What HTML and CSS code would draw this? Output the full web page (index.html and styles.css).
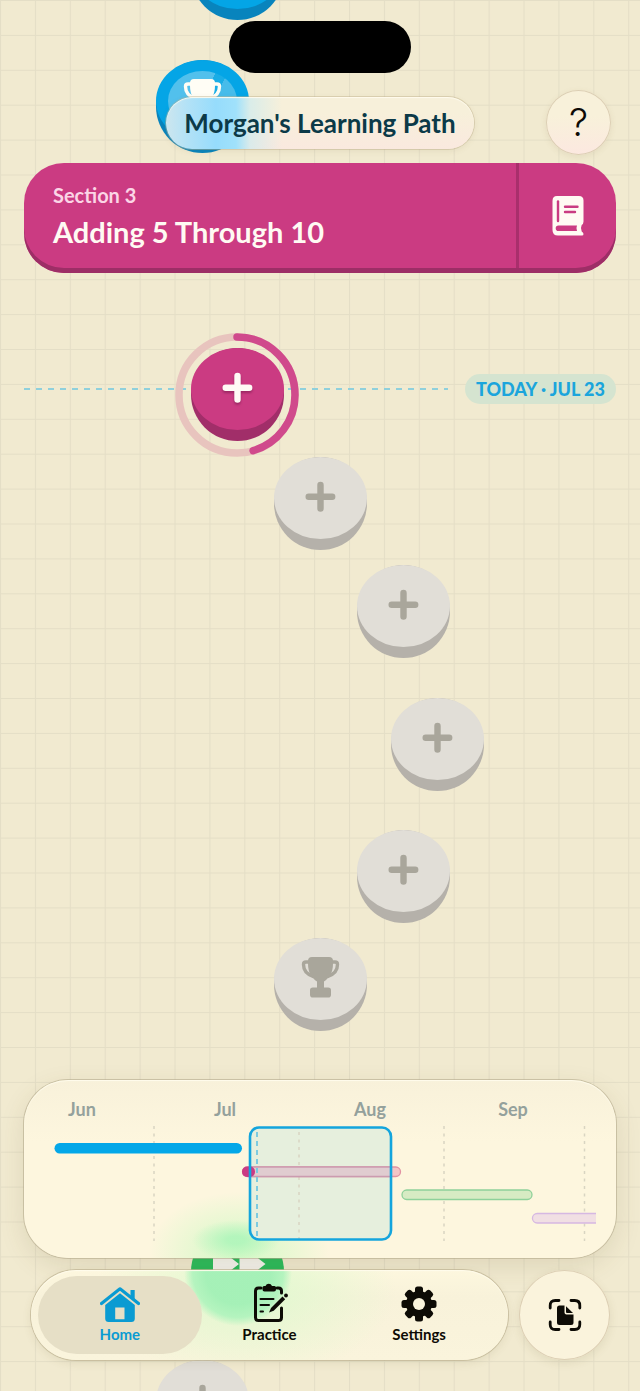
FILE: index.html
```html
<!DOCTYPE html>
<html lang="en">
<head>
<meta charset="utf-8">
<meta name="viewport" content="width=device-width, initial-scale=1">
<title>Learning Path</title>
<link rel="stylesheet" href="styles.css">
</head>
<body>
<svg class="defs" aria-hidden="true">
  <symbol id="plus" viewBox="0 0 93 93">
    <path d="M46.500 28v23.500M34.700 39.700h23.500" fill="none" stroke="currentColor" stroke-width="6.400" stroke-linecap="round"/>
  </symbol>
  <symbol id="trophy" viewBox="0 0 93 93">
    <path d="M37 24h-5q-2.500 0-2.500 2.500c0 7 5 10.500 10 12M56 24h5q2.500 0 2.500 2.500c0 7-5 10.500-10 12" fill="none" stroke="currentColor" stroke-width="3.400"/>
    <path d="M38 19h17q4 0 4 4v2.500c0 10-4 14.500-9 18v7h-7v-7c-5-3.500-9-8-9-18V23q0-4 4-4z" fill="currentColor"/>
    <rect x="36" y="49.500" width="21" height="10" rx="2.800" fill="currentColor"/>
  </symbol>
</svg>
<div class="screen">
  <svg class="grid-paper" aria-hidden="true">
    <defs>
      <pattern id="squares" width="34.900" height="34.900" patternUnits="userSpaceOnUse">
        <path d="M.500 0v34.900M0 .500h34.900" stroke="#e4dec6" stroke-width="1.200"/>
      </pattern>
    </defs>
    <rect width="100%" height="100%" fill="url(#squares)"/>
  </svg>

  <div class="island"></div>

  <header class="header">
    <h1 class="title">Morgan's Learning Path</h1>
    <button class="help" type="button" aria-label="Help">?</button>
  </header>

  <section class="section-card">
    <div class="section-text">
      <p class="section-label">Section 3</p>
      <h2 class="section-name">Adding 5 Through 10</h2>
    </div>
    <button class="section-book" type="button" aria-label="Open guide">
      <svg width="32" height="40" viewBox="0 0 32 40" aria-hidden="true">
        <path fill="#fffaf3" fill-rule="evenodd" d="M5 0h22q4.500 0 4.500 4.500v21q0 2.500-1.800 3.500-1.500 3 0 6.500 1.800 1 1.800 2.500 0 1.500-1.500 1.500H6q-5.500 0-5.500-5.500V5Q.500 0 5 0zM6.500 29.500a2.800 2.800 0 0 0 0 5.600h18.500q-1.200-2.800 0-5.600z"/>
        <path d="M6 5.500v19.500" stroke="#c93b82" stroke-width="2.400" stroke-linecap="round"/>
        <path d="M13 10.700h12.500M13 16h10" stroke="#c93b82" stroke-width="2.400" stroke-linecap="round"/>
      </svg>
    </button>
  </section>

  <main class="path">
    <div class="today">
      <span class="today-line"></span>
      <span class="today-pill">TODAY · JUL 23</span>
    </div>

    <button class="node done n-first" type="button" aria-label="Completed lesson"><span class="sheen"></span></button>
    <button class="node done n-cup" type="button" aria-label="Completed section trophy">
      <span class="sheen"></span><svg class="glyph"><use href="#trophy"/></svg>
    </button>

    <svg class="ring" viewBox="0 0 124 124" aria-hidden="true">
      <circle cx="62" cy="62" r="58" fill="none" stroke="#e8c4be" stroke-width="7.500"/>
      <circle cx="62" cy="62" r="58" fill="none" stroke="#d04a8c" stroke-width="7.500" stroke-linecap="round" pathLength="100" stroke-dasharray="45.500 100" transform="rotate(-90 62 62)"/>
    </svg>
    <button class="node current n-1" type="button" aria-label="Current lesson"><svg class="glyph"><use href="#plus"/></svg></button>
    <button class="node n-2" type="button" aria-label="Lesson 2"><svg class="glyph"><use href="#plus"/></svg></button>
    <button class="node n-3" type="button" aria-label="Lesson 3"><svg class="glyph"><use href="#plus"/></svg></button>
    <button class="node n-4" type="button" aria-label="Lesson 4"><svg class="glyph"><use href="#plus"/></svg></button>
    <button class="node n-5" type="button" aria-label="Lesson 5"><svg class="glyph"><use href="#plus"/></svg></button>
    <button class="node n-6" type="button" aria-label="Section trophy"><svg class="glyph"><use href="#trophy"/></svg></button>
    <button class="skip n-skip" type="button" aria-label="Skip ahead">
      <svg viewBox="0 0 93 93" aria-hidden="true"><path d="M22 24q0-5 4-2l22 17-22 17q-4 3-4-2zM48.500 24q0-5 4-2l22 17-22 17q-4 3-4-2z" fill="#f5f3ed"/></svg>
    </button>
    <button class="node n-7" type="button" aria-label="Next section lesson"><svg class="glyph"><use href="#plus"/></svg></button>
  </main>

  <section class="timeline" aria-label="Timeline">
    <svg class="chart" viewBox="0 0 552 158" role="img" aria-label="Sections from June to September">
      <g class="months">
        <text x="38" y="36">Jun</text>
        <text x="181" y="36">Jul</text>
        <text x="326" y="36">Aug</text>
        <text x="469" y="36">Sep</text>
      </g>
      <rect x="205" y="47" width="142" height="113" rx="9" fill="#e6efdd"/>
      <g stroke="#d9d5c2" stroke-width="1.500" stroke-dasharray="3 4.500">
        <path d="M110 46v115M255 52v108M400 46v115M540.500 46v115"/>
      </g>
      <rect x="10.500" y="63" width="187.500" height="10.500" rx="5.200" fill="#04a7e8"/>
      <rect x="198.500" y="87" width="158" height="9.500" rx="4.700" fill="#f3c5c5" stroke="#e192a3" stroke-width="1.300"/>
      <path d="M205 87h142v9.500H205z" fill="#e0ccd0" stroke="#cb9bb0" stroke-width="1.300"/>
      <rect x="198" y="86.500" width="13" height="10.500" rx="5" fill="#cb3b84"/>
      <path d="M213 52v108" stroke="#7ccbe0" stroke-width="2" stroke-dasharray="5 4"/>
      <rect x="358" y="110" width="130" height="9.500" rx="4.700" fill="#d7ebc3" stroke="#8fd19a" stroke-width="1.300"/>
      <path d="M552 133.500h-58.800a4.700 4.700 0 0 0 0 9.500H552z" fill="#f1dfe3"/>
      <path d="M552 133.500h-58.800a4.700 4.700 0 0 0 0 9.500H552" fill="none" stroke="#d6b8e2" stroke-width="1.300"/>
      <rect x="206" y="47.500" width="141" height="112" rx="9" fill="none" stroke="#14a5dd" stroke-width="2.600"/>
    </svg>
  </section>

  <footer class="dock">
    <nav class="tabs" aria-label="Main">
      <button class="tab active" type="button" aria-current="page">
        <svg width="40" height="38" viewBox="0 0 40 38" aria-hidden="true">
          <path d="M30.500 4h4.200v10l-4.200-3.500z" fill="currentColor"/>
          <path d="M1.500 17.500 20 2.800l18.500 14.700" fill="none" stroke="currentColor" stroke-width="3.200" stroke-linecap="round" stroke-linejoin="round"/>
          <path fill="currentColor" fill-rule="evenodd" d="M20 7.300 34.800 19v13.500q0 3.500-3.500 3.500H8.700q-3.500 0-3.500-3.500V19zM15.200 21.500v11.700h9.300V21.500z"/>
        </svg>
        <span>Home</span>
      </button>
      <button class="tab" type="button">
        <svg width="40" height="42" viewBox="0 0 40 42" aria-hidden="true">
          <path d="M12 6H9.500Q6.500 6 6.500 9v26.500q0 3 3 3h20q3 0 3-3V26M28 6h1.500q3 0 3 3v2" fill="none" stroke="currentColor" stroke-width="3" stroke-linecap="round"/>
          <path d="M15 4h1.500a3.500 3.500 0 0 1 6.500 0h2.500Q27 4 27 5.500v2q0 2-2 2h-9.500q-2 0-2-2v-2Q13.500 4 15 4z" fill="currentColor"/>
          <path d="M11.500 17h13M11.500 23h8.500M11.500 29.500h2.500" stroke="currentColor" stroke-width="2" stroke-linecap="round"/>
          <path d="m20 30.500 2-4.500 11.500-11.500 2.700 2.700L24.700 28.700z" fill="currentColor"/>
          <circle cx="37" cy="13.500" r="1.900" fill="currentColor"/>
        </svg>
        <span>Practice</span>
      </button>
      <button class="tab" type="button">
        <svg width="36" height="36" viewBox="-18 -18 36 36" aria-hidden="true">
          <g fill="currentColor">
            <rect x="-4" y="-17.500" width="8" height="35" rx="2.500"/>
            <rect x="-4" y="-17.500" width="8" height="35" rx="2.500" transform="rotate(45)"/>
            <rect x="-4" y="-17.500" width="8" height="35" rx="2.500" transform="rotate(90)"/>
            <rect x="-4" y="-17.500" width="8" height="35" rx="2.500" transform="rotate(135)"/>
            <circle r="13"/>
          </g>
          <circle r="6" fill="#faf4dc"/>
        </svg>
        <span>Settings</span>
      </button>
    </nav>
    <button class="scan" type="button" aria-label="Scan page">
      <svg width="34" height="34" viewBox="0 0 34 34" aria-hidden="true">
        <path d="M2.200 10V7.500q0-5 5-5H11M23 2.500h3.800q5 0 5 5V10M31.800 24v2.500q0 5-5 5H23M11 31.500H7.200q-5 0-5-5V24" fill="none" stroke="#0d0b05" stroke-width="2.800" stroke-linecap="round"/>
        <path d="M11.500 7.500h5v7q0 2 2 2h7v8q0 2.500-2.500 2.500H11.500Q9 27 9 24.500V10q0-2.500 2.500-2.500z" fill="#0d0b05"/>
        <path d="M18 8.200v5.800q0 1 1 1h6z" fill="#0d0b05"/>
      </svg>
    </button>
  </footer>
</div>
</body>
</html>
```
FILE: styles.css
```css
* { box-sizing: border-box; }

body {
  margin: 0;
  background: #f1ead0;
  font-family: Lato, "Noto Sans", sans-serif;
}

button {
  border: 0;
  padding: 0;
  margin: 0;
  background: none;
  font: inherit;
  color: inherit;
}

h1, h2, p { margin: 0; }

.defs {
  position: absolute;
  width: 0;
  height: 0;
}

.screen {
  position: relative;
  min-height: 100vh;
  overflow: hidden;
  padding: 21px 24px 31px;
  display: flex;
  flex-direction: column;
}

.grid-paper {
  position: absolute;
  inset: 0;
  width: 100%;
  height: 100%;
}

.island {
  position: relative;
  z-index: 3;
  align-self: center;
  width: 182px;
  height: 52px;
  border-radius: 26px;
  background: #000;
}

/* Header */
.header {
  position: relative;
  z-index: 2;
  display: grid;
  grid-template-columns: 1fr auto 1fr;
  align-items: center;
  margin-top: 17px;
  padding: 0 5px;
}

.title {
  grid-column: 2;
  padding: 0 18px;
  border-radius: 26px;
  font-size: 26px;
  line-height: 52px;
  font-weight: 700;
  white-space: nowrap;
  color: #0c3a48;
  background:
    linear-gradient(90deg, #cde6ee 0, #b4e2f6 20px, #96dcfc 50px, #a0e1fb 70px, rgba(205, 235, 240, 0.7) 84px, rgba(240, 240, 225, 0) 116px),
    linear-gradient(#f7f0da 30%, #fae9df);
  box-shadow: 0 0 0 1px rgba(190, 175, 140, 0.45), inset 0 1px 1px #fffbee, 0 2px 6px rgba(120, 100, 50, 0.1);
}

.help {
  justify-self: end;
  width: 65px;
  height: 65px;
  border-radius: 50%;
  font-family: Inter, sans-serif;
  font-size: 38px;
  line-height: 65px;
  font-weight: 300;
  color: #0d0b05;
  background: linear-gradient(#f8f1da 40%, #fce8e0);
  box-shadow: inset 0 0 0 1px #dccfb4, 0 2px 6px rgba(120, 100, 50, 0.1);
}

/* Section banner */
.section-card {
  position: relative;
  z-index: 2;
  display: flex;
  margin-top: 8px;
  padding-bottom: 5px;
  border-radius: 40px;
  color: #fffaf3;
  background: #cb3b82;
  box-shadow: inset 0 -5px 0 #9d2e66;
}

.section-text {
  flex: 1;
  padding: 19px 29px 18px;
}

.section-label {
  font-size: 20px;
  line-height: 27px;
  font-weight: 700;
  color: #fbd5e6;
}

.section-name {
  margin-top: 5px;
  font-size: 29px;
  line-height: 36px;
  font-weight: 700;
}

.section-book {
  display: grid;
  place-items: center;
  width: 100px;
  border-left: 3px solid #a92f6c;
}

/* Lesson path */
.path {
  position: relative;
  flex: 1;
  min-height: 807px;
  padding-top: 101px;
}

.today {
  display: flex;
  align-items: center;
  gap: 17px;
}

.today-line {
  flex: 1;
  height: 2px;
  background: repeating-linear-gradient(90deg, #8fd0dc 0 6px, transparent 6px 12px);
}

.today-pill {
  padding: 0 11px;
  border-radius: 15px;
  font-size: 18px;
  line-height: 30px;
  font-weight: 900;
  color: #1ba5dc;
  background: #d5e4d0;
}

.node, .skip {
  position: absolute;
  width: 93px;
  height: 93px;
  margin-left: -46px;
  border-radius: 50%;
  background: #b5b1aa;
  color: #a9a69b;
}

.node::before {
  content: "";
  position: absolute;
  inset: 0 0 11px;
  border-radius: 50%;
  background: #e1ded7;
}

.glyph {
  position: absolute;
  inset: 0;
  width: 93px;
  height: 93px;
}

.current {
  color: #fffaf5;
  background: #a12e69;
}

.current::before { background: #cb3b82; }

.current .glyph { filter: drop-shadow(0 2px 1px rgba(110, 20, 70, 0.5)); }

.done {
  color: #fffdf5;
  background: #0884bd;
}

.done::before { background: #04a5e6; }

.sheen {
  position: absolute;
  inset: 11px 12px 22px;
  border-radius: 50%;
  background: linear-gradient(115deg, #52c0ec 50%, #19ade6 50% 62%, #47bcea 62%);
}

.n-first .sheen { background: #19ade6; }

.skip {
  overflow: hidden;
  background: #2bbc5c;
}

.n-first { left: calc(50% - 83px); top: -346px; }
.n-cup { left: calc(50% - 118px); top: -213px; }
.n-1 { left: calc(50% - 83px); top: 75px; }
.n-2 { left: 50%; top: 184px; }
.n-3 { left: calc(50% + 83px); top: 292px; }
.n-4 { left: calc(50% + 117px); top: 425px; }
.n-5 { left: calc(50% + 83px); top: 557px; }
.n-6 { left: 50%; top: 665px; }
.n-skip { left: calc(50% - 83px); top: 952px; }
.n-7 { left: calc(50% - 118px); top: 1087px; }

.ring {
  position: absolute;
  left: calc(50% - 83px);
  top: 60px;
  width: 124px;
  height: 124px;
  margin-left: -62px;
}

/* Timeline */
.timeline {
  position: relative;
  z-index: 2;
  padding: 0 20px 20px;
  border-radius: 44px;
  background:
    radial-gradient(ellipse 44px 20px at 212px 160px, rgba(170, 245, 185, 0.8) 20%, rgba(170, 245, 185, 0)),
    radial-gradient(ellipse 90px 60px at 215px 172px, rgba(205, 250, 195, 0.9), rgba(205, 250, 195, 0)),
    linear-gradient(#f8f1da, #fdf6de 35%);
  box-shadow: 0 0 0 1px rgba(180, 170, 140, 0.6), inset 0 1px 1px #fffced, 0 8px 26px rgba(90, 75, 30, 0.13);
}

.chart {
  display: block;
  width: 100%;
  height: auto;
  overflow: visible;
}

.months {
  font-size: 18px;
  font-weight: 700;
  text-anchor: middle;
  fill: #94a19c;
}

/* Dock */
.dock {
  position: relative;
  z-index: 2;
  display: flex;
  gap: 11px;
  margin-top: 12px;
  padding: 0 6px 0 7px;
}

.tabs {
  flex: 1;
  display: grid;
  grid-template-columns: repeat(3, 1fr);
  padding: 6px 14px;
  border-radius: 45px;
  color: #0d0b05;
  background:
    radial-gradient(circle 54px at 207px 2px, rgba(162, 240, 182, 0.95) 60%, rgba(168, 243, 186, 0.8) 84%, rgba(190, 245, 190, 0)),
    radial-gradient(ellipse 150px 90px at 215px 20px, rgba(220, 250, 205, 0.9), rgba(220, 250, 205, 0)),
    linear-gradient(#fdf7de, #f8f2da 30%, #faf4dc);
  box-shadow: 0 0 0 1px rgba(190, 178, 145, 0.7), inset 0 1px 1px #fffced, 0 3px 10px rgba(90, 75, 30, 0.1);
}

.tab {
  display: flex;
  flex-direction: column;
  align-items: center;
  justify-content: flex-end;
  gap: 1px;
  height: 78px;
  padding-bottom: 11px;
  font-size: 15px;
  line-height: 18px;
  font-weight: 700;
}

.tab:nth-child(3) { gap: 3px; }

.active {
  margin: 0 -7px;
  border-radius: 39px;
  color: #0a9bd2;
  background: #e6dfc6;
}

.scan {
  display: grid;
  place-items: center;
  width: 91px;
  height: 90px;
  border-radius: 50%;
  background: #faf3dc;
  box-shadow: inset 0 0 0 1px #dccfb4, 0 3px 10px rgba(90, 75, 30, 0.1);
}
```
